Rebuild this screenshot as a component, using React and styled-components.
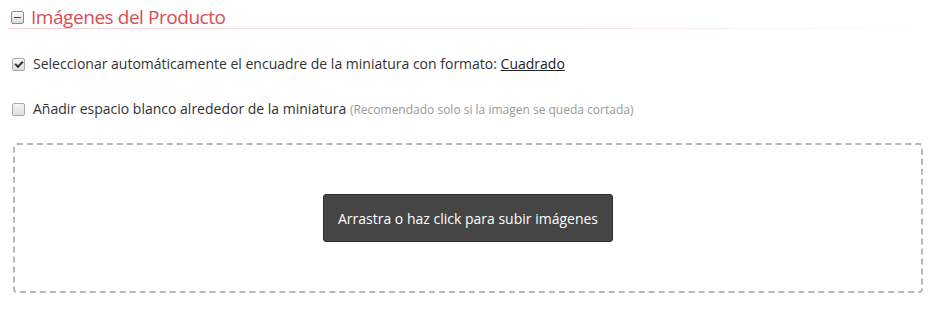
import React, { useState } from 'react';
import styled, { createGlobalStyle } from 'styled-components';

const GlobalStyle = createGlobalStyle`
  body {
    margin: 0;
    background: #fff;
    font-family: "Open Sans", "Liberation Sans", sans-serif;
    color: #333;
  }
`;

const Page = styled.div`
  padding: 6px 10px 0 8px;
`;

const Header = styled.div`
  display: flex;
  align-items: center;
  gap: 7px;
  height: 22px;
  padding-left: 3px;
  position: relative;
  &::after {
    content: '';
    position: absolute;
    left: 0;
    right: 0;
    bottom: -1px;
    height: 1px;
    background: linear-gradient(to right, #f2d0d0 0%, #f4dcdc 55%, rgba(240, 240, 240, 0) 100%);
  }
`;

const Toggle = styled.span`
  width: 11px;
  height: 11px;
  border: 1px solid #8a8a8a;
  border-radius: 2px;
  background: linear-gradient(#fafafa, #dcdcdc);
  display: flex;
  align-items: center;
  justify-content: center;
  &::before {
    content: '';
    width: 7px;
    height: 1px;
    background: #444;
  }
`;

const Title = styled.h2`
  margin: 0;
  font-size: 19px;
  letter-spacing: -0.45px;
  font-weight: 400;
  color: #d94b55;
  line-height: 22px;
`;

const Option = styled.label`
  display: flex;
  align-items: center;
  gap: 8px;
  margin-left: 4px;
  margin-top: ${({ first }) => (first ? '26px' : '25px')};
  font-size: 14px;
  line-height: 20px;
  color: #333;
`;

const Check = styled.input`
  appearance: none;
  margin: 0;
  width: 13px;
  height: 13px;
  border: 1px solid #a9a9a9;
  border-radius: 2px;
  background: linear-gradient(#f4f4f4, #dedede);
  display: flex;
  align-items: center;
  justify-content: center;
  &:checked::before {
    content: '';
    width: 6px;
    height: 3px;
    border-left: 2px solid #333;
    border-bottom: 2px solid #333;
    transform: translateY(-1px) rotate(-45deg);
  }
`;

const Link = styled.a`
  color: #222;
  text-decoration: underline;
`;

const Hint = styled.span`
  font-size: 12px;
  color: #999;
`;

const DropZone = styled.div`
  margin: 23px 0 0 5px;
  height: 146px;
  border: 2px dashed #b8b8b8;
  border-radius: 4px;
  display: flex;
  align-items: center;
  justify-content: center;
`;

const UploadButton = styled.button`
  font-family: inherit;
  font-size: 14px;
  color: #fff;
  background: #454545;
  border: 1px solid #2e2e2e;
  border-radius: 3px;
  padding: 0 14px;
  height: 48px;
  min-width: 290px;
  white-space: nowrap;
  cursor: pointer;
`;

export default function App() {
  const [crop, setCrop] = useState(true);
  const [pad, setPad] = useState(false);

  return (
    <Page>
      <GlobalStyle />
      <Header>
        <Toggle />
        <Title>Imágenes del Producto</Title>
      </Header>
      <Option first>
        <Check type="checkbox" checked={crop} onChange={() => setCrop(!crop)} />
        <span>
          Seleccionar automáticamente el encuadre de la miniatura con formato: <Link href="#">Cuadrado</Link>
        </span>
      </Option>
      <Option>
        <Check type="checkbox" checked={pad} onChange={() => setPad(!pad)} />
        <span>
          Añadir espacio blanco alrededor de la miniatura <Hint>(Recomendado solo si la imagen se queda cortada)</Hint>
        </span>
      </Option>
      <DropZone>
        <UploadButton>Arrastra o haz click para subir imágenes</UploadButton>
      </DropZone>
    </Page>
  );
}
